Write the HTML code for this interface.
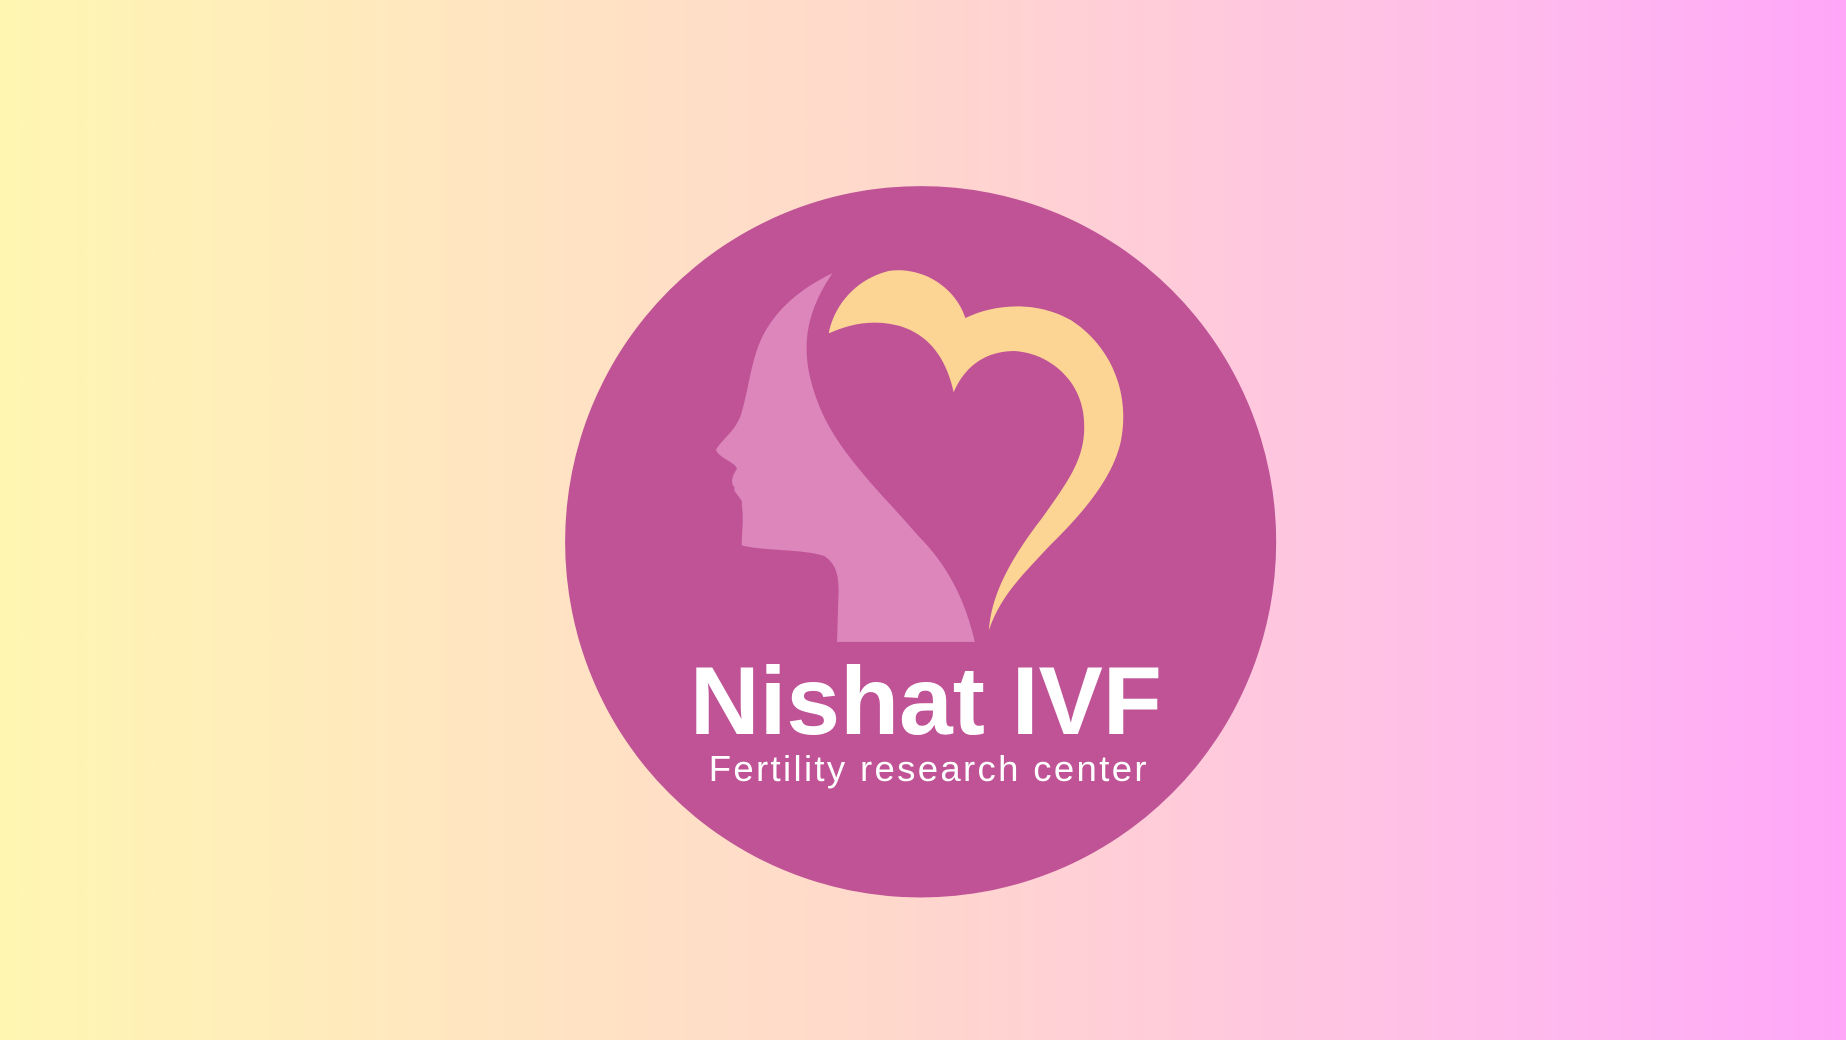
<!DOCTYPE html>
<html><head><meta charset="utf-8"><style>
html,body{margin:0;padding:0;width:1846px;height:1040px;overflow:hidden}
body{background:linear-gradient(90deg,#fff6b2 0%,#ffe6c0 25%,#ffd8cc 48%,#ffc6e0 70%,#ffb8ee 85%,#ffa6f8 100%)}
svg{position:absolute;left:0;top:0}
</style></head><body>
<svg width="1846" height="1040" viewBox="0 0 1568 883" preserveAspectRatio="none">
<ellipse cx="782" cy="460" rx="302" ry="302" fill="#bf5396"/>
<path d="M707,232 C680,245 660,262 648,285 C638,305 636,330 630,350 C626,365 614,372 608,382 C612,390 624,392 626,398 C622,404 620,410 624,414 C622,418 632,424 630,428 C632,440 630,452 630,463 C650,468 680,466 700,472 C712,480 713,492 712,510 L711,545 L828,545 C820,510 805,480 780,455 C750,420 712,385 696,345 C680,305 680,272 707,232 Z" fill="#dc86bc"/>
<path d="M704,283 C708,262 724,238 755,230 C785,226 812,245 820,270 C845,258 880,255 910,272 C945,295 960,335 952,375 C944,410 915,440 890,465 C870,487 850,505 840,535 C842,505 858,475 885,440 C910,405 925,385 920,350 C915,320 890,300 862,298 C838,298 820,310 810,333 C804,305 790,285 765,277 C740,270 720,276 704,283 Z" fill="#fcd595"/>
<text x="586" y="623" font-family="Liberation Sans, sans-serif" font-weight="bold" font-size="82" fill="#fff">Nishat IVF</text>
<text x="602" y="663" font-family="Liberation Sans, sans-serif" font-size="31" letter-spacing="2" fill="#fff">Fertility research center</text>
</svg>
</body></html>
